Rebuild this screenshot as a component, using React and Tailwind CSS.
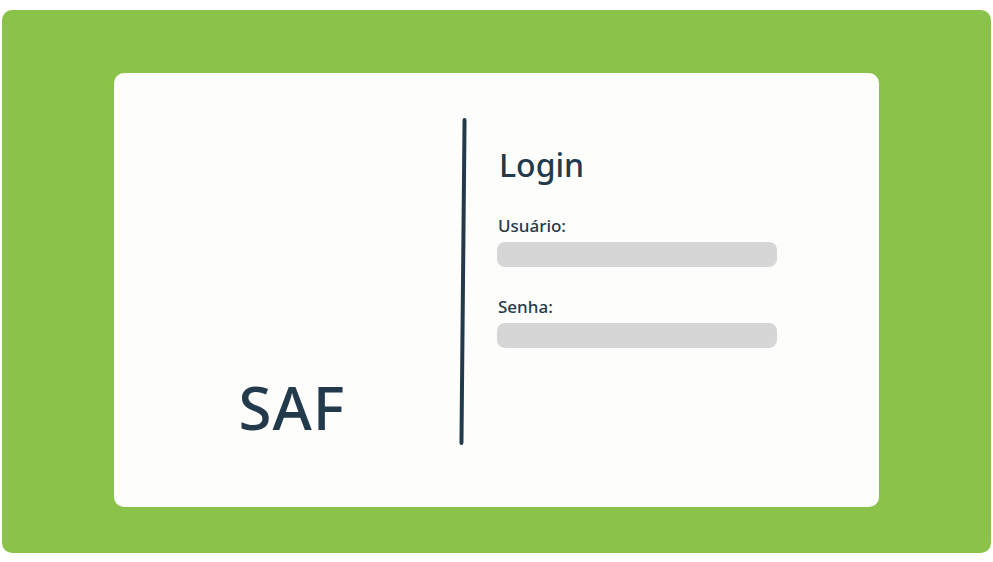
import React from "react";

export default function App() {
  return (
    <div
      className="w-[993px] h-[562px] bg-white pt-[10px] pl-[2px]"
      style={{ fontFamily: '"Noto Sans", "DejaVu Sans", sans-serif' }}
    >
      <div className="w-[989px] h-[543px] rounded-[10px] bg-[#8bc34a] pt-[63px] pl-[112px]">
        <div className="w-[765px] h-[434px] rounded-[10px] bg-[#fdfdfb] flex">
          {/* left: brand */}
          <div className="w-[347px] flex items-end justify-center pb-[70px] pl-[9px]">
            <span className="text-[60px] font-medium leading-none text-[#233a4c] tracking-[1px]">SAF</span>
          </div>

          {/* divider */}
          <div className="pt-[45px]">
            <div className="w-[4px] h-[327px] rounded-full bg-[#233a4c] rotate-[0.55deg]" />
          </div>

          {/* right: form */}
          <div className="pl-[32px] pt-[76px] flex flex-col text-[#233a4c]">
            <h1 className="text-[32px] font-medium leading-none mb-[36px] pl-[2px]">Login</h1>
            <label className="text-[17px] font-medium leading-none mb-[8px] pl-[1px]">Usuário:</label>
            <div className="w-[280px] h-[25px] rounded-[8px] bg-[#d6d6d6] mb-[31px]" />
            <label className="text-[17px] font-medium leading-none mb-[8px] pl-[1px]">Senha:</label>
            <div className="w-[280px] h-[25px] rounded-[8px] bg-[#d6d6d6]" />
          </div>
        </div>
      </div>
    </div>
  );
}
